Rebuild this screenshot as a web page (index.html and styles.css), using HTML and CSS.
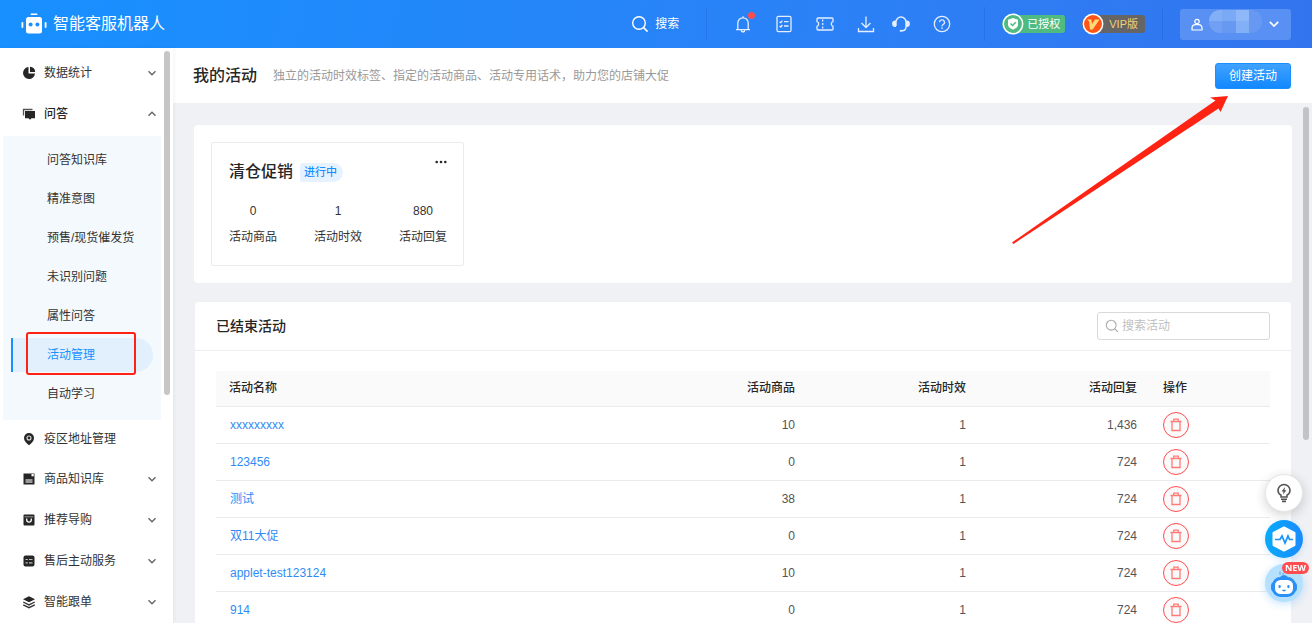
FILE: index.html
```html
<!DOCTYPE html>
<html lang="zh-CN">
<head>
<meta charset="utf-8">
<title>智能客服机器人</title>
<link rel="stylesheet" href="styles.css">
</head>
<body>
<svg class="sprite" aria-hidden="true">
  <symbol id="down" viewBox="0 0 10 10"><path d="M1.500 3.200 5 6.700 8.500 3.200" fill="none" stroke="currentColor" stroke-width="1.400"/></symbol>
  <symbol id="lens" viewBox="0 0 18 18"><circle cx="8" cy="8" r="6.300" fill="none" stroke="currentColor" stroke-width="1.400"/><path d="m12.600 12.600 4 4" stroke="currentColor" stroke-width="1.500"/></symbol>
  <symbol id="trash" viewBox="0 0 14 14"><path d="M1.500 3.500h11M3 3.500v9h8v-9M4.800 3.200V1.200h4.400v2" fill="none" stroke="currentColor" stroke-width="1.300"/></symbol>
</svg>
<header class="topbar">
  <a class="brand" href="#">
    <svg width="26" height="22" viewBox="0 0 26 22" fill="#fff"><rect x="9.500" y="0.500" width="7" height="1.600" rx=".8"/><rect x="5" y="4" width="16" height="16.500" rx="2.500"/><rect x="0.500" y="9" width="1.800" height="6" rx=".9"/><rect x="23.700" y="9" width="1.800" height="6" rx=".9"/><circle cx="9.600" cy="11.500" r="2" fill="#1e8fff"/><circle cx="16.400" cy="11.500" r="2" fill="#1e8fff"/></svg>
    <span>智能客服机器人</span>
  </a>
  <button class="plain find"><svg width="18" height="18"><use href="#lens"/></svg>搜索</button>
  <span class="divider"></span>
  <nav class="tools" aria-label="工具">
    <div class="tool-set">
      <button class="plain bell" aria-label="通知"><svg width="18" height="18" viewBox="0 0 18 18" fill="none" stroke="currentColor" stroke-width="1.300"><path d="M2 14.700h14M3.800 14.700V8a5.200 5.200 0 0 1 10.400 0v6.700M9 2.800V1.300M7.300 15.300a1.700 1.700 0 0 0 3.400 0"/></svg></button>
      <button class="plain" aria-label="任务"><svg width="18" height="18" viewBox="0 0 18 18" fill="none" stroke="currentColor" stroke-width="1.300"><rect x="2" y="1.300" width="14" height="15.400" rx="1.500"/><path d="m4.600 6.700 1.200 1 1.600-2M9 6.700h4.500M4.600 11l1.200 1 1.600-2M9 11h4.500"/></svg></button>
      <button class="plain" aria-label="卡券"><svg width="18" height="18" viewBox="0 0 18 18" fill="none" stroke="currentColor" stroke-width="1.300"><path d="M2 3h14a1 1 0 0 1 1 1v2.700a2.400 2.400 0 0 0 0 4.600V14a1 1 0 0 1-1 1H2a1 1 0 0 1-1-1v-2.700a2.400 2.400 0 0 0 0-4.600V4a1 1 0 0 1 1-1z"/><path d="M6.700 4.500v9" stroke-dasharray="2 1.500"/></svg></button>
      <button class="plain" aria-label="下载"><svg width="18" height="18" viewBox="0 0 18 18" fill="none" stroke="currentColor" stroke-width="1.300"><path d="M9 1.500v10.500M4.500 8 9 12.500 13.500 8M1.500 13v3.500h15V13"/></svg></button>
    </div>
    <div class="tool-set">
      <button class="plain" aria-label="客服"><svg width="18" height="18" viewBox="0 0 18 18" fill="none" stroke="currentColor" stroke-width="1.400"><path d="M4 11V7a5 5 0 0 1 10 0v4.500c0 2.500-1.500 4.300-4 4.300"/><path d="M3.300 6.300v5a2.500 2.500 0 0 1 0-5zM14.700 6.300v5a2.500 2.500 0 0 0 0-5z" fill="currentColor"/><path d="M7.800 15.800h2.400" stroke-width="1.800"/></svg></button>
      <button class="plain" aria-label="帮助"><svg width="18" height="18" viewBox="0 0 18 18" fill="none" stroke="currentColor" stroke-width="1.300"><circle cx="9" cy="9" r="7.700"/><path d="M6.500 7.300a2.500 2.500 0 1 1 3.700 2.200C9.400 10 9 10.300 9 11.400M9 12.600V14"/></svg></button>
    </div>
  </nav>
  <span class="divider"></span>
  <div class="badges">
    <span class="badge green"><svg width="22" height="22" viewBox="0 0 22 22"><circle cx="11" cy="11" r="9.700" fill="#4fbb80" stroke="#fff" stroke-width="1.500"/><path d="m11 5 5 1.700v4.500c0 2.800-2.400 4.500-5 5.500-2.600-1-5-2.700-5-5.500V6.700z" fill="#fff"/><path d="m8.500 10.500 2 2 3.300-3.300" fill="none" stroke="#4fbb80" stroke-width="1.500"/></svg>已授权</span>
    <span class="badge vip"><svg width="22" height="22" viewBox="0 0 22 22"><circle cx="11" cy="11" r="9.700" fill="#ff5415" stroke="#fff" stroke-width="1.500"/><path d="M5 6.500h4.300l.7 4.500 3-4.500H17.500L10.700 16.500H8L7 8.300z" fill="#ffd978"/></svg>VIP版</span>
  </div>
  <span class="divider"></span>
  <button class="account" aria-label="账户">
    <svg width="12" height="13" viewBox="0 0 12 13" fill="none" stroke="#fff" stroke-width="1.200"><circle cx="6" cy="3.500" r="2.200"/><path d="M1 12V10a3.500 3.500 0 0 1 3.500-3.300h3A3.500 3.500 0 0 1 11 10v2z"/></svg>
    <span class="mosaic"><i></i><i></i><i></i><i></i><i></i><i></i><i></i><i></i></span>
    <svg width="12" height="12"><use href="#down"/></svg>
  </button>
</header>

<div class="frame">
  <aside class="sidebar">
    <nav class="menu">
      <a class="group" href="#"><svg width="14" height="14" viewBox="0 0 14 14" fill="#262626"><path d="M6.500 1v6.500H13A6 6 0 1 1 6.500 1z"/><path d="M8 .8A5.600 5.600 0 0 1 13.200 6H8z"/></svg><span>数据统计</span><svg class="caret" width="10" height="10"><use href="#down"/></svg></a>
      <a class="group open" href="#"><svg width="14" height="14" viewBox="0 0 14 14"><path d="M1.500 8.500V2.500h9" fill="none" stroke="#555" stroke-width="1.300"/><path d="M3 4h10v7.300h-3.500L8 12.700l-1.500-1.400H3z" fill="#262626"/></svg><span>问答</span><svg class="caret" width="10" height="10"><use href="#down"/></svg></a>
      <div class="sub">
        <a href="#">问答知识库</a>
        <a href="#">精准意图</a>
        <a href="#">预售/现货催发货</a>
        <a href="#">未识别问题</a>
        <a href="#">属性问答</a>
        <a class="active" href="#" aria-current="page">活动管理</a>
        <a href="#">自动学习</a>
      </div>
      <a class="group single" href="#"><svg width="14" height="14" viewBox="0 0 14 14"><path d="M7 1a5 5 0 0 1 5 5c0 3-2.500 5.500-5 7.200C4.500 11.500 2 9 2 6a5 5 0 0 1 5-5z" fill="#262626"/><circle cx="7" cy="6" r="2" fill="none" stroke="#ddd" stroke-width="1.100"/></svg><span>疫区地址管理</span></a>
      <a class="group" href="#"><svg width="14" height="14" viewBox="0 0 14 14"><path d="M1.500 1.500h11v11h-11z" fill="#262626"/><path d="M9.500 2h2.300v2.300H9.500z" fill="#fff"/><path d="M3.500 7h7v4h-7z" fill="#999"/></svg><span>商品知识库</span><svg class="caret" width="10" height="10"><use href="#down"/></svg></a>
      <a class="group" href="#"><svg width="14" height="14" viewBox="0 0 14 14"><rect x="1.500" y="1.500" width="11" height="11" rx="1" fill="#262626"/><path d="M2.500 3.800h9" stroke="#999"/><path d="M4.700 5.500v1.300a2.300 2.300 0 0 0 4.600 0V5.500" fill="none" stroke="#fff" stroke-width="1.300"/></svg><span>推荐导购</span><svg class="caret" width="10" height="10"><use href="#down"/></svg></a>
      <a class="group" href="#"><svg width="14" height="14" viewBox="0 0 14 14"><rect x="1.500" y="1.500" width="11" height="11" rx="2" fill="#262626"/><path d="M3.500 5.500h2.300M7 5.500h3.500M3.500 8.800h2.300M7 8.800h3.500" stroke="#bbb" stroke-width="1.200"/></svg><span>售后主动服务</span><svg class="caret" width="10" height="10"><use href="#down"/></svg></a>
      <a class="group" href="#"><svg width="14" height="14" viewBox="0 0 14 14"><path d="m7 1.200 6 3-6 3-6-3z" fill="#262626"/><path d="m1.200 7 5.800 2.900L12.800 7M1.200 9.800 7 12.700l5.800-2.900" fill="none" stroke="#333" stroke-width="1.300"/></svg><span>智能跟单</span><svg class="caret" width="10" height="10"><use href="#down"/></svg></a>
    </nav>
    <span class="thumb side-thumb"></span>
  </aside>

  <main class="main">
    <div class="page-head">
      <h1>我的活动</h1>
      <p>独立的活动时效标签、指定的活动商品、活动专用话术，助力您的店铺大促</p>
      <button class="create">创建活动</button>
    </div>
    <div class="content">
      <section class="panel running">
        <article class="card">
          <div class="card-head"><h2>清仓促销</h2><span class="state">进行中</span><button class="plain more" aria-label="更多"><svg width="12" height="4" viewBox="0 0 12 4" fill="#262626"><circle cx="1.700" cy="2" r="1.300"/><circle cx="6" cy="2" r="1.300"/><circle cx="10.300" cy="2" r="1.300"/></svg></button></div>
          <dl class="stats">
            <div><dd>0</dd><dt>活动商品</dt></div>
            <div><dd>1</dd><dt>活动时效</dt></div>
            <div><dd>880</dd><dt>活动回复</dt></div>
          </dl>
        </article>
      </section>
      <section class="panel ended">
        <div class="panel-head">
          <h3>已结束活动</h3>
          <label class="search"><svg width="14" height="14"><use href="#lens"/></svg><input type="text" placeholder="搜索活动" aria-label="搜索活动"></label>
        </div>
        <div class="table-wrap">
          <table>
            <colgroup><col><col class="num-col"><col class="num-col"><col class="num-col"><col class="act-col"></colgroup>
            <thead><tr><th>活动名称</th><th class="num">活动商品</th><th class="num">活动时效</th><th class="num">活动回复</th><th>操作</th></tr></thead>
            <tbody>
              <tr><td><a href="#">xxxxxxxxx</a></td><td class="num">10</td><td class="num">1</td><td class="num">1,436</td><td><button class="del" aria-label="删除"><svg width="14" height="14"><use href="#trash"/></svg></button></td></tr>
              <tr><td><a href="#">123456</a></td><td class="num">0</td><td class="num">1</td><td class="num">724</td><td><button class="del" aria-label="删除"><svg width="14" height="14"><use href="#trash"/></svg></button></td></tr>
              <tr><td><a href="#">测试</a></td><td class="num">38</td><td class="num">1</td><td class="num">724</td><td><button class="del" aria-label="删除"><svg width="14" height="14"><use href="#trash"/></svg></button></td></tr>
              <tr><td><a href="#">双11大促</a></td><td class="num">0</td><td class="num">1</td><td class="num">724</td><td><button class="del" aria-label="删除"><svg width="14" height="14"><use href="#trash"/></svg></button></td></tr>
              <tr><td><a href="#">applet-test123124</a></td><td class="num">10</td><td class="num">1</td><td class="num">724</td><td><button class="del" aria-label="删除"><svg width="14" height="14"><use href="#trash"/></svg></button></td></tr>
              <tr><td><a href="#">914</a></td><td class="num">0</td><td class="num">1</td><td class="num">724</td><td><button class="del" aria-label="删除"><svg width="14" height="14"><use href="#trash"/></svg></button></td></tr>
            </tbody>
          </table>
        </div>
      </section>
      <span class="thumb main-thumb"></span>
    </div>
    <svg class="pointer" width="218" height="150" viewBox="0 0 218 150" aria-hidden="true"><path d="M217 1 199 2.500 204.500 5.500 1 147.500 2.500 149 207.500 13.500 209.500 17z" fill="#ff2314"/></svg>
  </main>
</div>

<div class="floaters">
  <button class="float tip" aria-label="提示"><svg width="16" height="20" viewBox="0 0 16 20" fill="none" stroke="#555" stroke-width="1.600"><path d="M5 14v-1.800C3 11 2 9.500 2 7.500a6 6 0 0 1 12 0c0 2-1 3.500-3 4.700V14z"/><path d="M5 16.200h6M6 18.400h4"/><path d="M9 4 5.500 8.500h2L7 11.500l3.500-4.200h-2z" fill="#555" stroke="none"/></svg></button>
  <button class="float pulse" aria-label="诊断"><svg width="26" height="26" viewBox="0 0 26 26"><path d="M13 1.500 23.500 7v12L13 24.500 2.500 19V7z" fill="#fff" stroke="#fff" stroke-width="2" stroke-linejoin="round"/><path d="M4 13.500h5l2-3.500 3 7 3-7 1.500 3.500H22" fill="none" stroke="#1592fb" stroke-width="1.700"/></svg></button>
  <button class="float bot" aria-label="机器人助手"><svg width="28" height="30" viewBox="0 0 28 30"><path d="M10 7V3.500M13 7V5" stroke="#6db9f5" stroke-width="1.500"/><path d="M9 10q5-6 10 0z" fill="#2b90f5"/><rect x="1" y="14" width="26" height="10" rx="4" fill="#2b90f5"/><rect x="3.500" y="10.500" width="21" height="17" rx="7" fill="#fff" stroke="#2b90f5" stroke-width="3"/><rect x="8.500" y="17" width="2.200" height="3.200" rx="1.100" fill="#2b90f5"/><rect x="17.300" y="17" width="2.200" height="3.200" rx="1.100" fill="#2b90f5"/><path d="M12.500 22q1.500 1.300 3 0" fill="none" stroke="#2b90f5" stroke-width="1.300"/></svg><span class="new">NEW</span></button>
</div>
</body>
</html>
```
FILE: styles.css
```css
*, *::before, *::after { box-sizing: border-box; }
body {
  margin: 0;
  height: 100vh;
  display: flex;
  flex-direction: column;
  overflow: hidden;
  font: 12px/20px "Liberation Sans", "Noto Sans CJK SC", sans-serif;
  color: #333;
}
h1, h2, h3, p, dl, dd { margin: 0; }
a { color: inherit; text-decoration: none; }
button, input { font: inherit; }
svg { flex: none; display: block; }
.sprite { position: absolute; width: 0; height: 0; }
.plain { border: 0; padding: 0; background: none; color: inherit; cursor: pointer; }

.topbar {
  flex: none;
  height: 48px;
  padding: 0 21px;
  display: flex;
  align-items: center;
  color: #fff;
  background: linear-gradient(100deg, #1890ff, #2d7ff5 70%, #3274ee);
}
.brand { display: flex; align-items: center; gap: 6px; margin-right: auto; font-size: 16px; }
.find { display: flex; align-items: center; gap: 6px; margin-right: 27px; }
.divider { width: 1px; height: 34px; background: rgba(20, 70, 180, .2); }
.tools { display: flex; gap: 17px; margin: 0 33px 0 27px; color: #e3eeff; }
.tool-set { display: flex; gap: 23px; }
.bell { position: relative; }
.bell::after {
  content: "";
  position: absolute;
  top: -3px;
  right: -3px;
  width: 7px;
  height: 7px;
  border-radius: 50%;
  background: #ff4d4f;
}
.badges { display: flex; gap: 17px; margin: 0 17px; }
.badge {
  display: flex;
  align-items: center;
  gap: 3px;
  height: 18px;
  padding-right: 5px;
  border-radius: 11px 3px 3px 11px;
  font-size: 11px;
}
.green { background: #4fbb80; }
.vip { background: #666565; color: #f6cf72; gap: 5px; padding-right: 7px; }
.account {
  display: flex;
  align-items: center;
  gap: 6px;
  width: 111px;
  height: 31px;
  margin-left: 17px;
  padding: 0 11px;
  border: 0;
  border-radius: 3px;
  background: #5890f3;
  color: #fff;
}
.mosaic {
  flex: 1;
  display: grid;
  grid-template-columns: repeat(4, 1fr);
  height: 23px;
  margin-bottom: 6px;
  border-radius: 11px;
  overflow: hidden;
  background: #6799f2;
}
.mosaic i:nth-child(1) { background: #82aff6; }
.mosaic i:nth-child(2) { background: #7aa9f5; }
.mosaic i:nth-child(3) { background: #8fb8f8; }
.mosaic i:nth-child(5) { background: #719ff3; }
.mosaic i:nth-child(7) { background: #82aff6; }

.frame { flex: 1; min-height: 0; display: flex; }
.sidebar {
  position: relative;
  z-index: 1;
  flex: none;
  width: 173px;
  padding-top: 4px;
  background: #fff;
  box-shadow: 1px 0 4px rgba(0, 0, 0, .05);
}
.group { display: flex; align-items: center; height: 41px; padding: 0 16px 0 22px; }
.group span { flex: 1; margin-left: 8px; }
.caret { color: #666; }
.open { color: #262626; font-weight: 500; }
.open .caret { transform: rotate(180deg); }
.single { height: 38px; }
.sub { margin: 2px 12px 0 3px; padding: 4px 0 7px; background: #f4f9fd; }
.sub a { display: flex; align-items: center; height: 39px; padding-left: 44px; }
.sub .active { position: relative; z-index: 0; color: #1890ff; }
.active::before {
  content: "";
  position: absolute;
  z-index: -1;
  top: 3px;
  bottom: 2px;
  left: 8px;
  right: 8px;
  border-left: 2px solid #1890ff;
  border-radius: 0 17px 17px 0;
  background: #e2f0fe;
}
.active::after {
  content: "";
  position: absolute;
  top: -3px;
  left: 23px;
  width: 110px;
  height: 43px;
  border: 2px solid #ff2114;
  border-radius: 3px;
}
.thumb { position: absolute; width: 6px; border-radius: 3px; background: #c6c6c6; }
.side-thumb { top: 3px; right: 3px; height: 344px; }

.main { position: relative; flex: 1; min-width: 0; display: flex; flex-direction: column; }
.page-head { flex: none; display: flex; align-items: center; height: 55px; padding: 0 21px 0 20px; background: #fff; }
h1 { font-size: 16px; font-weight: 500; color: #262626; margin-right: 16px; }
.page-head p { color: #999; }
.create {
  margin-left: auto;
  width: 76px;
  height: 26px;
  padding: 0;
  border: 1px solid #1890ff;
  border-radius: 3px;
  color: #fff;
  background: linear-gradient(#40a2ff, #1388ff);
}
.content { position: relative; flex: 1; min-height: 0; overflow: hidden; padding: 22px 20px 0 21px; background: #eff1f5; }
.main-thumb { top: 4px; right: 3px; height: 333px; background: #c2c3c6; }
.panel { border-radius: 4px; background: #fff; }
.running { margin-bottom: 19px; padding: 17px; }
.ended { margin: 0 1px; }
.card { width: 253px; padding: 17px 16px 18px 17px; border: 1px solid #ebebeb; border-radius: 2px; }
.card-head { display: flex; align-items: center; height: 24px; }
h2 { font-size: 16px; font-weight: 500; color: #262626; }
.state {
  margin-left: 7px;
  padding: 0 6px 0 4px;
  border-radius: 3px 10px 10px 3px;
  font-size: 11px;
  line-height: 19px;
  font-weight: 500;
  color: #1890ff;
  background: #e6f2ff;
}
.more { align-self: flex-start; margin-left: auto; }
.stats { display: flex; justify-content: space-between; margin-top: 17px; text-align: center; }
.stats div { display: grid; gap: 6px; }
.panel-head { display: flex; justify-content: space-between; align-items: center; height: 49px; padding: 0 21px; border-bottom: 1px solid #eee; }
h3 { font-size: 14px; font-weight: 500; color: #262626; }
.search { display: flex; align-items: center; gap: 3px; width: 173px; height: 28px; padding: 0 7px; border: 1px solid #d9d9d9; border-radius: 3px; color: #aaa; }
.search input { flex: 1; min-width: 0; padding: 0; border: 0; outline: 0; background: none; color: #333; }
.search input::placeholder { color: #bfbfbf; }
.table-wrap { padding: 20px 21px; }
table { width: 100%; table-layout: fixed; border-collapse: separate; border-spacing: 0; }
.num-col { width: 171px; }
.act-col { width: 120px; }
th, td { padding: 0 13px; border-bottom: 1px solid #ebebeb; text-align: left; vertical-align: middle; }
th { height: 36px; padding-bottom: 2px; font-weight: 500; color: #262626; background: #fafafa; }
th:first-child { border-top-left-radius: 3px; }
td { height: 37px; color: #555; }
td:first-child { padding-left: 14px; }
td a { color: #2f8cf5; }
.num { text-align: right; }
.del {
  display: flex;
  align-items: center;
  justify-content: center;
  width: 26px;
  height: 26px;
  padding: 0;
  border: 1px solid #ff4d4f;
  border-radius: 50%;
  color: #ff7b78;
  background: #fafafa;
}
.pointer { position: absolute; top: 47px; right: 83px; pointer-events: none; }

.floaters { position: fixed; z-index: 2; right: 9px; bottom: 21px; display: grid; gap: 6px; }
.float { position: relative; display: flex; align-items: center; justify-content: center; width: 38px; height: 38px; padding: 0; border: 0; border-radius: 50%; }
.tip { margin-bottom: 2px; background: #fff; border: 1px solid #e5e5e5; box-shadow: 0 3px 12px rgba(0, 0, 0, .18); }
.pulse { background: linear-gradient(90deg, #08aafa, #1b8bff); box-shadow: 0 2px 6px rgba(24, 144, 255, .2); }
.bot { background: #b5e1ff; box-shadow: 0 2px 8px rgba(24, 144, 255, .25); }
.new {
  position: absolute;
  top: -2px;
  right: -6px;
  padding: 0 3px;
  border-radius: 6px;
  font: bold 9px/12px "Open Sans", sans-serif;
  color: #fff;
  background: #ff4d50;
}
```
